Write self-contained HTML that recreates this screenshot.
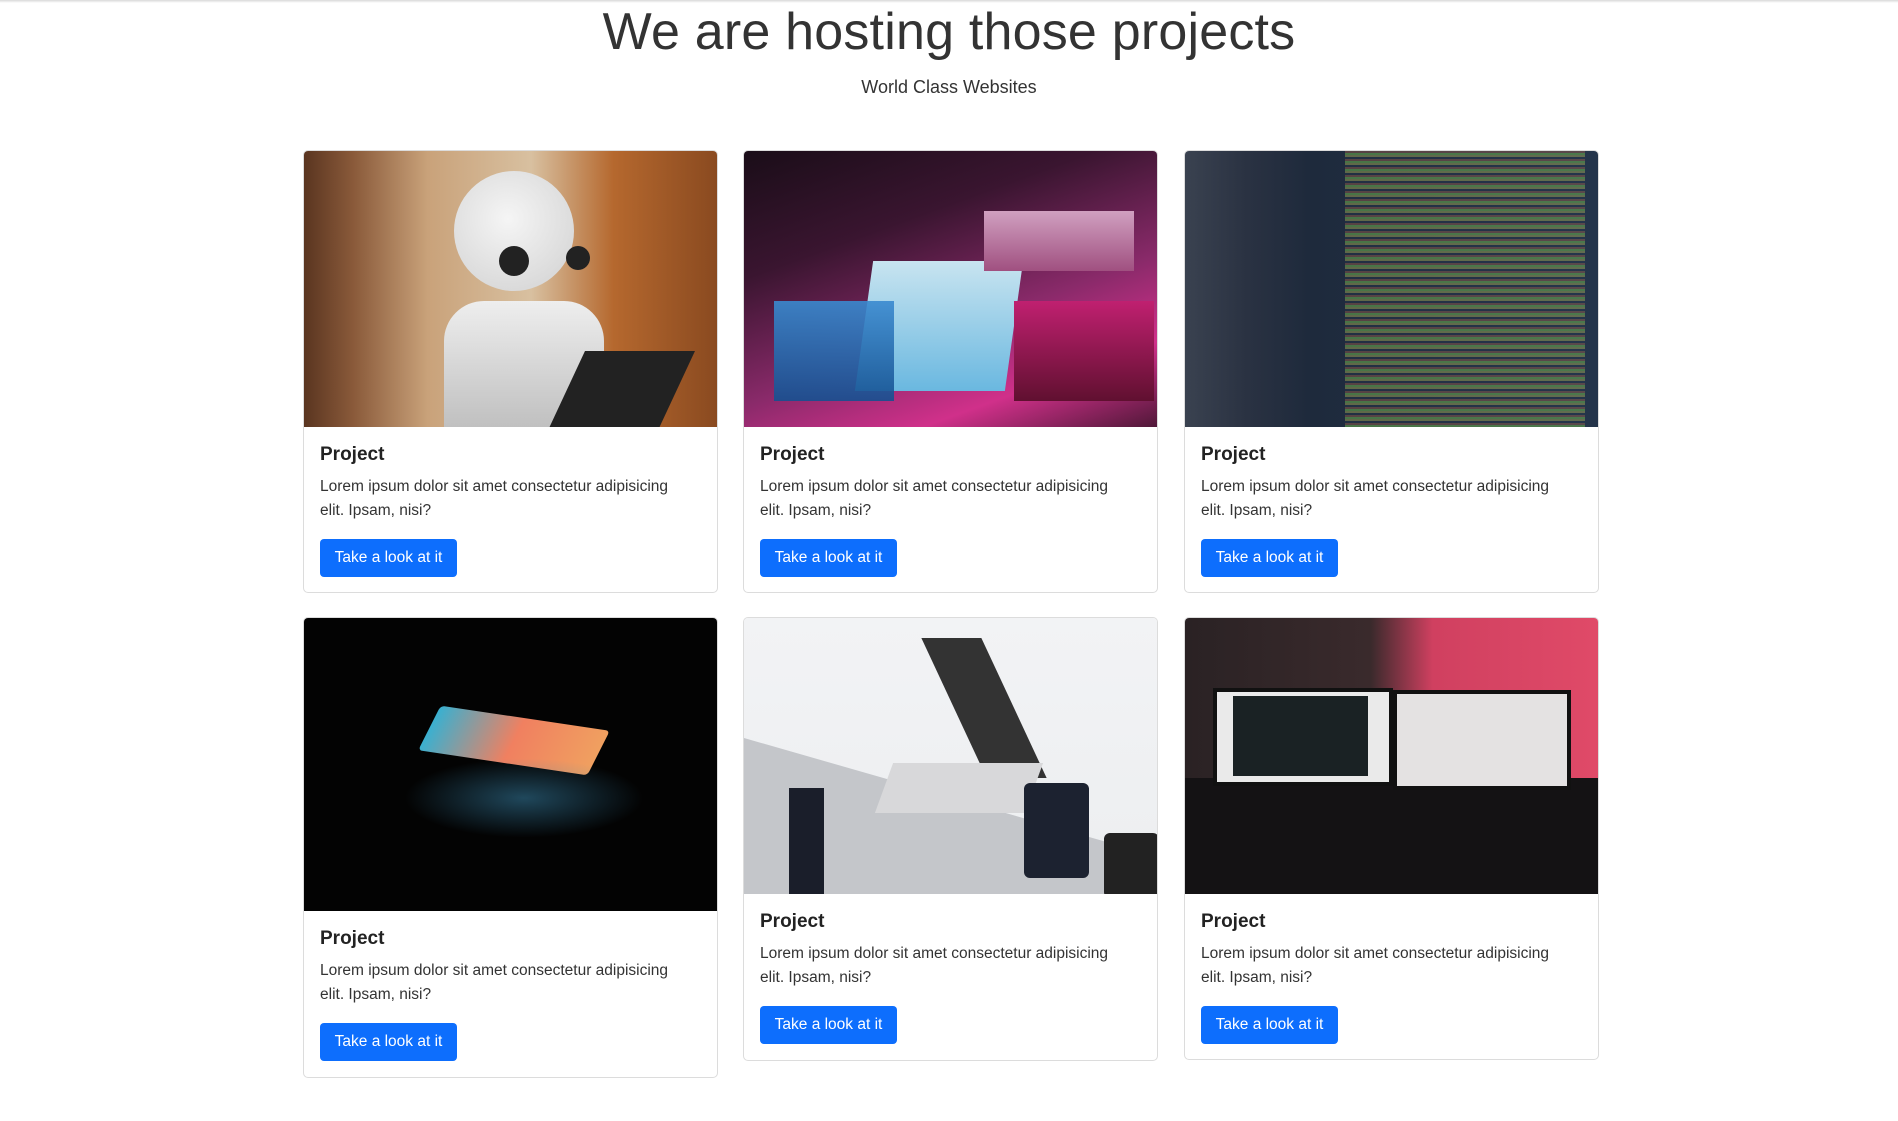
<!DOCTYPE html>
<html><head><meta charset="utf-8"><style>
*{box-sizing:border-box;margin:0;padding:0}
html,body{width:1898px;height:1121px;overflow:hidden;background:#fff;font-family:"Liberation Sans",sans-serif;color:#212529}
.topline{position:absolute;left:0;top:0;width:1898px;height:3px;background:linear-gradient(#d8d8d8,#fff)}
h1{position:absolute;top:0;left:0;width:1898px;text-align:center;font-weight:300;font-size:52px;line-height:64px;color:#333;letter-spacing:0.2px}
.sub{position:absolute;top:75px;left:0;width:1898px;text-align:center;font-size:18px;line-height:24px;color:#333}
.card{position:absolute;width:415px;border:1px solid #dcdcdc;border-radius:5px;background:#fff;overflow:hidden}
.img{width:100%;position:relative;overflow:hidden}
.body{padding:16px 16px 16px 16px}
.t{font-size:19px;line-height:24px;color:#222;margin-bottom:8px;font-weight:600}
.p{font-size:15.5px;line-height:24px;color:#333;margin-bottom:16px;max-width:370px}
.btn{display:inline-block;background:#0d6efd;color:#fff;font-size:15.5px;line-height:22px;padding:8px 12px;border-radius:4px;width:137px;text-align:center;height:38px}
.s{position:absolute}
</style></head><body>
<div class="topline"></div>
<h1>We are hosting those projects</h1>
<div class="sub">World Class Websites</div>

<div class="card" style="left:303px;top:150px;height:443px">
 <div class="img" style="height:276px;background:linear-gradient(90deg,#5a3520 0%,#8a5a3a 12%,#c9a27a 30%,#d8c0a0 55%,#b5682e 75%,#8a4a20 100%)">
  <div class="s" style="left:150px;top:20px;width:120px;height:120px;border-radius:50%;background:radial-gradient(circle at 45% 40%,#f5f5f5,#d0d0d0)"></div>
  <div class="s" style="left:195px;top:95px;width:30px;height:30px;border-radius:50%;background:#222"></div>
  <div class="s" style="left:262px;top:95px;width:24px;height:24px;border-radius:50%;background:#222"></div>
  <div class="s" style="left:140px;top:150px;width:160px;height:140px;border-radius:40px 40px 0 0;background:linear-gradient(#eee,#bbb)"></div>
  <div class="s" style="left:260px;top:200px;width:110px;height:90px;background:#222;transform:skewX(-25deg)"></div>
 </div>
 <div class="body"><div class="t">Project</div><div class="p">Lorem ipsum dolor sit amet consectetur adipisicing elit. Ipsam, nisi?</div><span class="btn">Take a look at it</span></div>
</div>

<div class="card" style="left:743px;top:150px;height:443px">
 <div class="img" style="height:276px;background:linear-gradient(160deg,#1a0d18 0%,#3a1530 30%,#8a2a6a 60%,#d0308a 80%,#501838 100%)">
  <div class="s" style="left:120px;top:110px;width:150px;height:130px;background:linear-gradient(#c8e4f0,#6ab8e0);transform:skewX(-8deg)"></div>
  <div class="s" style="left:30px;top:150px;width:120px;height:100px;background:linear-gradient(#3a8ad0,#155090);opacity:.9"></div>
  <div class="s" style="left:240px;top:60px;width:150px;height:60px;background:linear-gradient(#d0a0c0,#a05080)"></div>
  <div class="s" style="left:270px;top:150px;width:140px;height:100px;background:linear-gradient(#c02070,#601030)"></div>
 </div>
 <div class="body"><div class="t">Project</div><div class="p">Lorem ipsum dolor sit amet consectetur adipisicing elit. Ipsam, nisi?</div><span class="btn">Take a look at it</span></div>
</div>

<div class="card" style="left:1184px;top:150px;height:443px">
 <div class="img" style="height:276px;background:linear-gradient(90deg,#3a4250 0%,#2a3242 15%,#1e2a3c 30%,#24344a 100%)">
  <div class="s" style="left:160px;top:0;width:240px;height:276px;background:repeating-linear-gradient(0deg,rgba(120,200,80,.55) 0 2px,rgba(220,120,80,.35) 2px 4px,rgba(40,60,80,.3) 4px 6px,rgba(200,200,90,.45) 6px 8px);opacity:.85"></div>
 </div>
 <div class="body"><div class="t">Project</div><div class="p">Lorem ipsum dolor sit amet consectetur adipisicing elit. Ipsam, nisi?</div><span class="btn">Take a look at it</span></div>
</div>

<div class="card" style="left:303px;top:617px;height:461px">
 <div class="img" style="height:293px;background:#030303">
  <div class="s" style="left:120px;top:100px;width:180px;height:45px;background:linear-gradient(90deg,#3ab0d0,#f08060,#f0a060);transform:skewX(-20deg) rotate(8deg);border-radius:4px"></div>
  <div class="s" style="left:100px;top:140px;width:240px;height:80px;border-radius:50%;background:radial-gradient(ellipse,rgba(60,140,180,.5),transparent 70%)"></div>
 </div>
 <div class="body"><div class="t">Project</div><div class="p">Lorem ipsum dolor sit amet consectetur adipisicing elit. Ipsam, nisi?</div><span class="btn">Take a look at it</span></div>
</div>

<div class="card" style="left:743px;top:617px;height:444px">
 <div class="img" style="height:276px;background:linear-gradient(#f2f3f5,#eceef0)">
  <div class="s" style="left:0;top:120px;width:415px;height:160px;background:#c4c6ca;transform:skewY(16deg);transform-origin:0 0"></div>
  <div class="s" style="left:45px;top:170px;width:35px;height:110px;background:#1a1e2a"></div>
  <div class="s" style="left:210px;top:20px;width:60px;height:140px;background:#333;transform:skewX(25deg)"></div>
  <div class="s" style="left:140px;top:145px;width:150px;height:50px;background:#d8d8da;transform:skewX(-20deg)"></div>
  <div class="s" style="left:280px;top:165px;width:65px;height:95px;background:#1c2230;border-radius:6px"></div>
  <div class="s" style="left:360px;top:215px;width:55px;height:65px;background:#222;border-radius:6px"></div>
 </div>
 <div class="body"><div class="t">Project</div><div class="p">Lorem ipsum dolor sit amet consectetur adipisicing elit. Ipsam, nisi?</div><span class="btn">Take a look at it</span></div>
</div>

<div class="card" style="left:1184px;top:617px;height:443px">
 <div class="img" style="height:276px;background:linear-gradient(90deg,#2a2224 0%,#3a2a2c 45%,#d04060 60%,#e04a68 100%)">
  <div class="s" style="left:0;top:160px;width:415px;height:116px;background:#141214"></div>
  <div class="s" style="left:28px;top:70px;width:180px;height:98px;background:#eaeaea;border:4px solid #111"></div>
  <div class="s" style="left:48px;top:78px;width:135px;height:80px;background:#1a2224"></div>
  <div class="s" style="left:208px;top:72px;width:178px;height:100px;background:#e4e2e2;border:4px solid #111"></div>
 </div>
 <div class="body"><div class="t">Project</div><div class="p">Lorem ipsum dolor sit amet consectetur adipisicing elit. Ipsam, nisi?</div><span class="btn">Take a look at it</span></div>
</div>
</body></html>
